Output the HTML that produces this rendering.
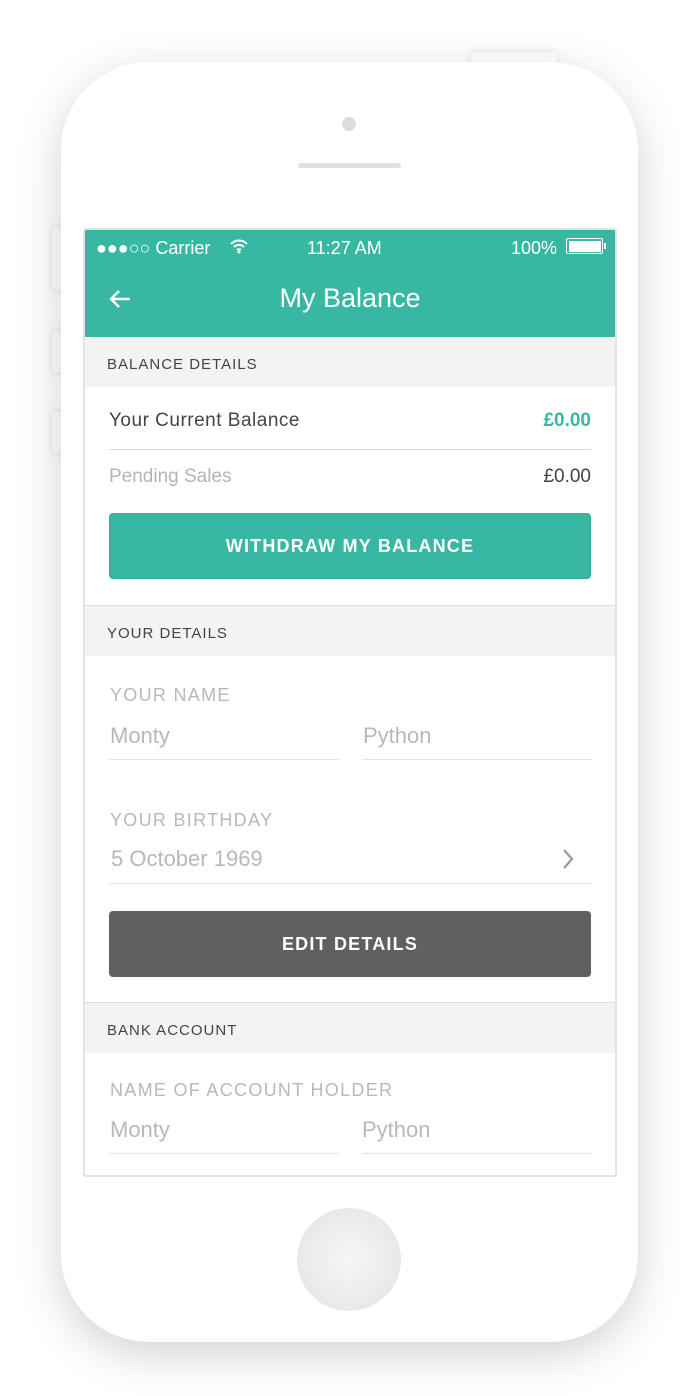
<!DOCTYPE html>
<html><head><meta charset="utf-8"><style>
*{margin:0;padding:0;box-sizing:border-box}
body{width:691px;height:1396px;background:#fff;position:relative;overflow:hidden;font-family:"Liberation Sans",sans-serif}
.a{position:absolute}
.phone{left:61px;top:62px;width:577px;height:1280px;background:#fff;border-radius:88px;box-shadow:0 12px 45px rgba(0,0,0,0.18)}
.btn{background:#fff;box-shadow:0 0 8px rgba(0,0,0,0.12);border-radius:4px}
.screen{left:83px;top:228px;width:534px;height:949px;border:2px solid #e2e3e3;border-radius:3px;overflow:hidden;background:#fff}
.t{position:absolute;white-space:nowrap;line-height:1}
.hdr{position:absolute;left:0;width:100%;height:50px;background:#f3f3f3}
.hdr span{position:absolute;left:22px;top:19px;font-size:15px;letter-spacing:1px;color:#444}
.lbl{font-size:18px;color:#b8b8b8;letter-spacing:1.3px}
.val{font-size:22px;color:#b8b8b8}
.ln{position:absolute;height:1px;background:#e4e4e4}
</style></head><body>
<div class="a btn" style="left:471px;top:52px;width:86px;height:14px"></div>
<div class="a btn" style="left:52px;top:227px;width:14px;height:63px"></div>
<div class="a btn" style="left:52px;top:331px;width:14px;height:41px"></div>
<div class="a btn" style="left:52px;top:412px;width:14px;height:41px"></div>
<div class="a phone"></div>
<div class="a" style="left:342px;top:117px;width:14px;height:14px;border-radius:50%;background:#ddd"></div>
<div class="a" style="left:298px;top:163px;width:103px;height:5px;border-radius:3px;background:#e0e0e0"></div>
<div class="a" style="left:297px;top:1208px;width:104px;height:103px;border-radius:50%;background:radial-gradient(circle,#f6f6f6 0%,#e2e3e4 100%)"></div>
<div class="a screen">
 <div class="a" style="left:0;top:0;width:100%;height:107px;background:#38b8a3"></div>
 <div class="t" style="left:11px;top:9px;font-size:18px;color:#fff">●●●○○ Carrier</div>
 <svg class="a" style="left:144px;top:8px" width="20" height="16" viewBox="0 0 20 16"><path d="M2 6a11 11 0 0 1 16 0M5 9a7 7 0 0 1 10 0M8 12a3 3 0 0 1 4 0" stroke="#fff" stroke-width="2" fill="none"/><circle cx="10" cy="14" r="1.5" fill="#fff"/></svg>
 <div class="t" style="left:222px;top:9px;font-size:18px;color:#fff">11:27 AM</div>
 <div class="t" style="left:426px;top:9px;font-size:18px;color:#fff">100%</div>
 <div class="a" style="left:481px;top:8px;width:37px;height:16px;border:1.5px solid #fff;border-radius:2px;padding:1.5px"><div style="width:100%;height:100%;background:#fff"></div></div>
 <div class="a" style="left:519px;top:13px;width:2px;height:6px;background:#fff"></div>
 <svg class="a" style="left:23px;top:59px" width="24" height="20" viewBox="0 0 24 20"><path d="M22 10H3M11 2L3 10l8 8" stroke="#fff" stroke-width="2.4" fill="none"/></svg>
 <div class="t" style="left:0;width:100%;text-align:center;top:55px;font-size:27px;color:#fff">My Balance</div>
 <div class="hdr" style="top:107px"><span>BALANCE DETAILS</span></div>
 <div class="t" style="left:24px;top:181px;font-size:19px;color:#444;letter-spacing:0.5px">Your Current Balance</div>
 <div class="t" style="right:24px;top:181px;font-size:19px;color:#38b8a3;font-weight:bold">£0.00</div>
 <div class="ln" style="left:24px;width:482px;top:219px;background:#ddd"></div>
 <div class="t" style="left:24px;top:237px;font-size:19px;color:#b5b5b5">Pending Sales</div>
 <div class="t" style="right:24px;top:237px;font-size:19px;color:#444">£0.00</div>
 <div class="a" style="left:24px;top:283px;width:482px;height:66px;background:#38b8a3;border-radius:4px;border:1px solid #2fae98"></div>
 <div class="t" style="left:24px;width:482px;text-align:center;top:307px;font-size:18px;color:#fff;letter-spacing:1.2px;font-weight:bold">WITHDRAW MY BALANCE</div>
 <div class="ln" style="left:0;width:100%;top:375px;background:#ddd"></div>
 <div class="hdr" style="top:376px"><span>YOUR DETAILS</span></div>
 <div class="t lbl" style="left:25px;top:456px">YOUR NAME</div>
 <div class="t val" style="left:25px;top:495px">Monty</div>
 <div class="t val" style="left:278px;top:495px">Python</div>
 <div class="ln" style="left:24px;width:230px;top:529px"></div>
 <div class="ln" style="left:277px;width:230px;top:529px"></div>
 <div class="t lbl" style="left:25px;top:581px">YOUR BIRTHDAY</div>
 <div class="t val" style="left:26px;top:618px">5 October 1969</div>
 <svg class="a" style="left:476px;top:618px" width="14" height="22" viewBox="0 0 14 22"><path d="M3 2l8 9-8 9" stroke="#999" stroke-width="2.2" fill="none"/></svg>
 <div class="ln" style="left:24px;width:483px;top:653px"></div>
 <div class="a" style="left:24px;top:681px;width:482px;height:66px;background:#606060;border-radius:4px"></div>
 <div class="t" style="left:24px;width:482px;text-align:center;top:705px;font-size:18px;color:#fff;letter-spacing:1.2px;font-weight:bold">EDIT DETAILS</div>
 <div class="ln" style="left:0;width:100%;top:772px;background:#ddd"></div>
 <div class="hdr" style="top:773px"><span>BANK ACCOUNT</span></div>
 <div class="t lbl" style="left:25px;top:851px">NAME OF ACCOUNT HOLDER</div>
 <div class="t val" style="left:25px;top:889px">Monty</div>
 <div class="t val" style="left:277px;top:889px">Python</div>
 <div class="ln" style="left:24px;width:230px;top:923px"></div>
 <div class="ln" style="left:277px;width:230px;top:923px"></div>
</div>
</body></html>
